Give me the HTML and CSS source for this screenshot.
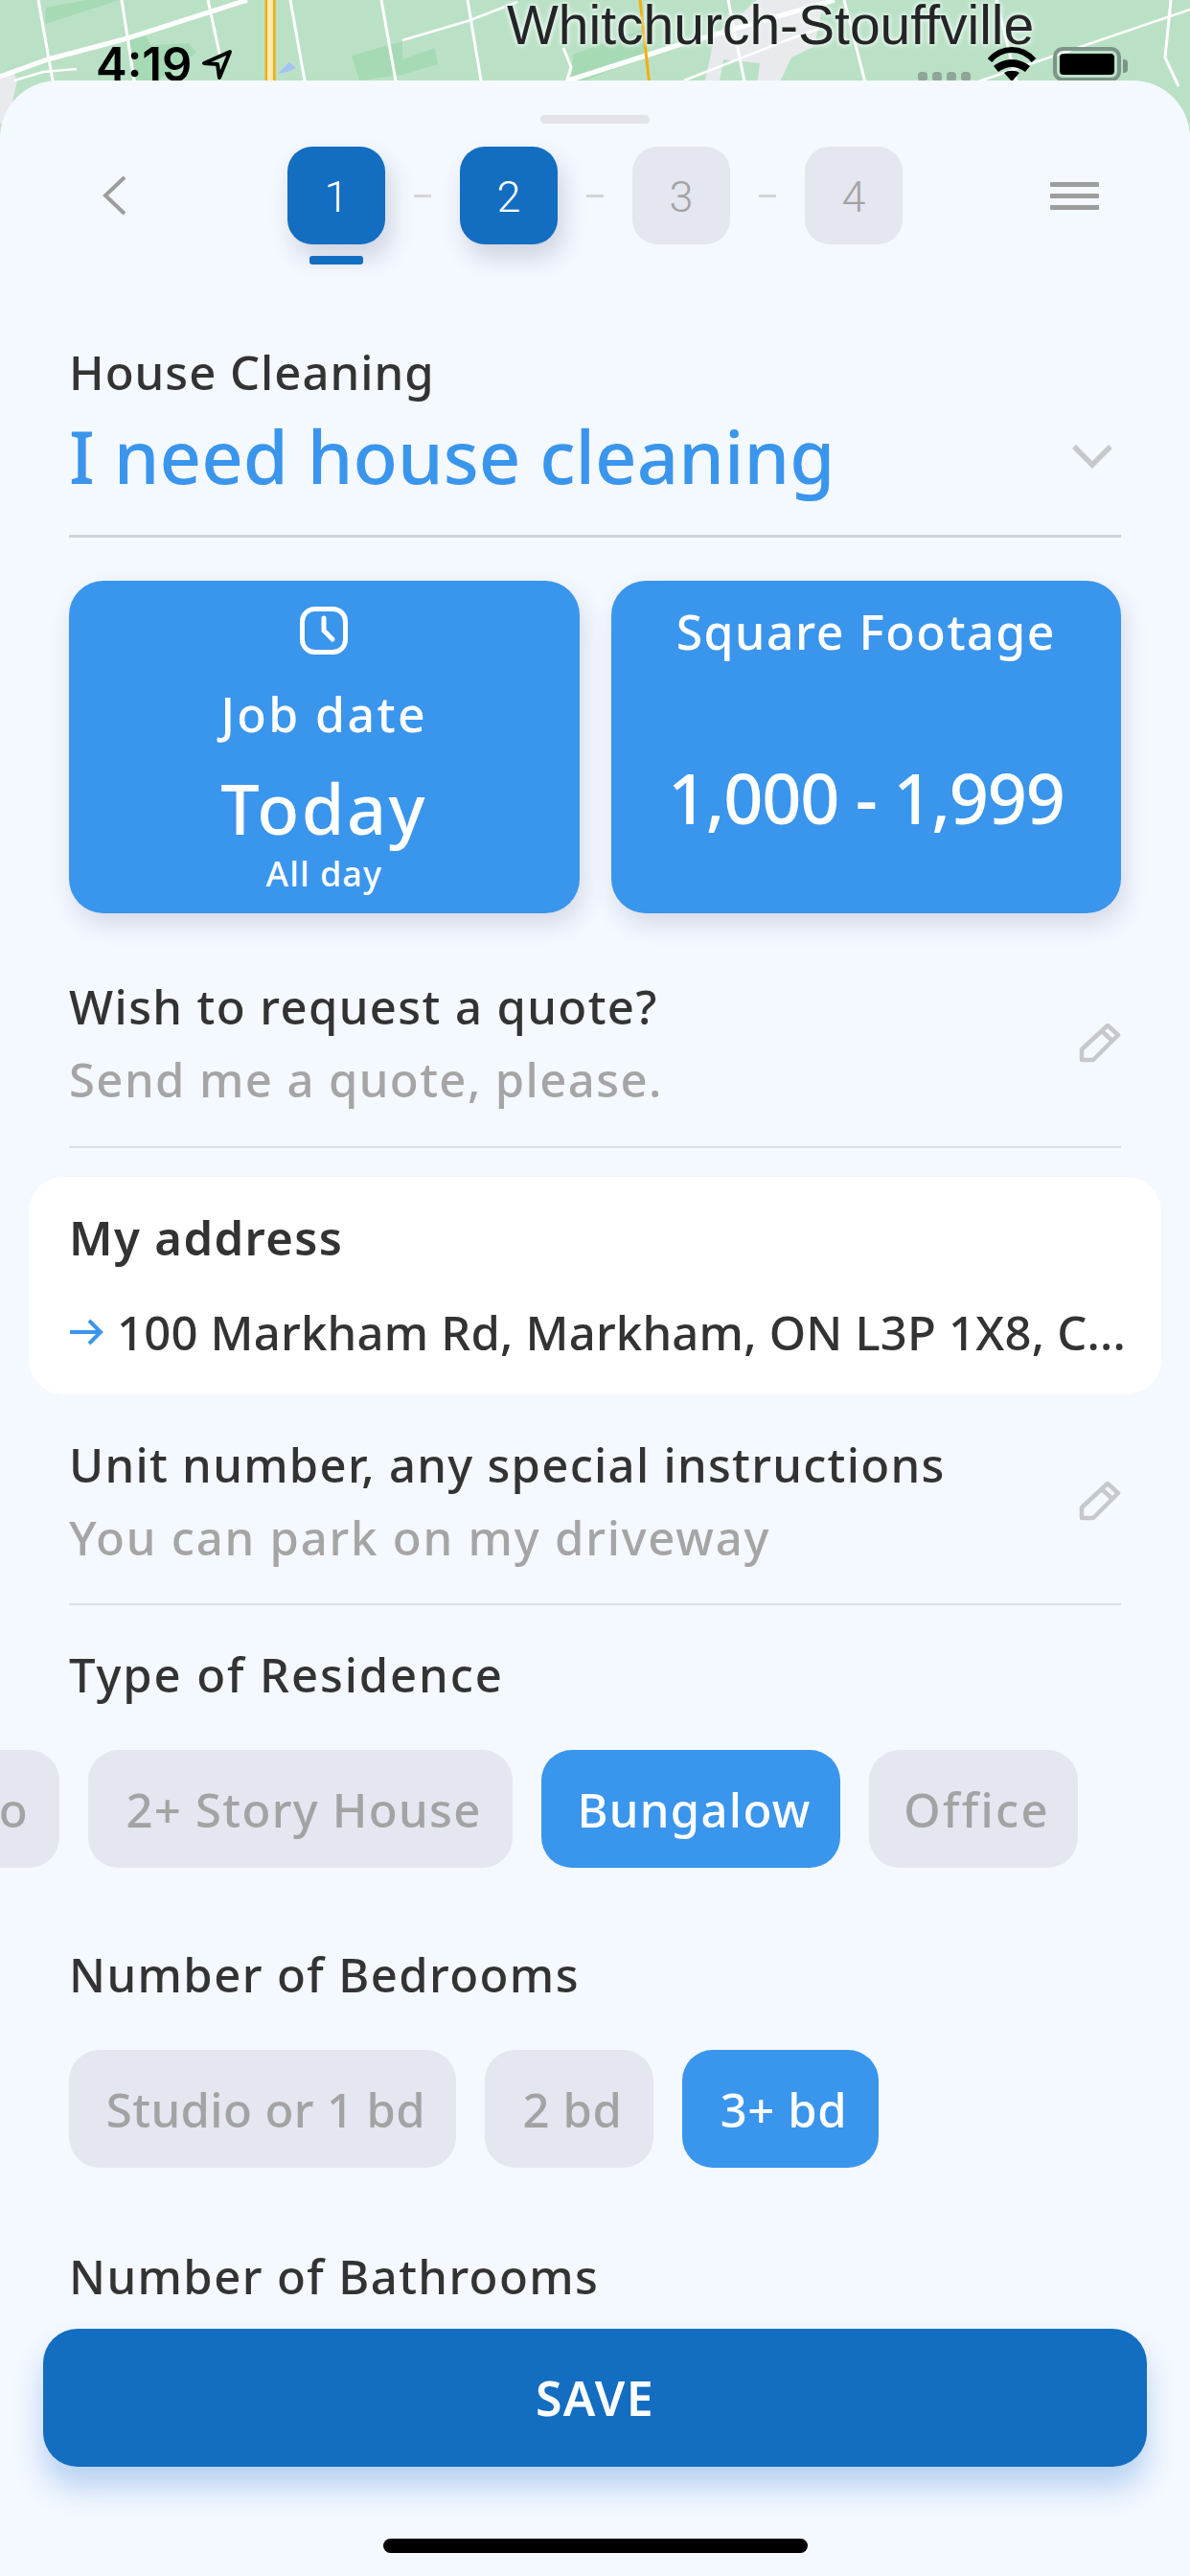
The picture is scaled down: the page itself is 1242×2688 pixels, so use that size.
FILE: index.html
```html
<!DOCTYPE html>
<html lang="en">
<head>
<meta charset="utf-8">
<title>House Cleaning</title>
<link rel="stylesheet" href="styles.css">
</head>
<body>
<div class="phone">
  <svg class="map" width="1242" height="170" viewBox="0 0 1242 170">
    <rect class="m-bg" width="1242" height="170"/>
    <polygon class="m-dark" points="48,8 90,0 125,0 47,25"/>
    <polygon class="m-dark" points="135,40 152,37 157,47 197,45 205,55 165,84 140,84"/>
    <polygon class="m-dark" points="367,58 420,43 420,62 454,50 457,67 420,78 375,84"/>
    <polygon class="m-dark" points="598,57 672,30 672,60 610,84 596,84"/>
    <polygon class="m-gray" points="790,0 860,0 850,48 826,60 812,90 790,90 793,66 755,62 750,90 735,90 745,40"/>
    <polygon class="m-gray" points="0,80 15,77 18,84 10,120 0,130"/>
    <polygon class="m-blue" points="290,77 302,65 309,71 300,75"/>
    <g class="m-road">
      <path d="M40 0L56 90M127 0L141 90M217 0L230 60M303 0L319 90M398 0L414 90M488 0L503 90M881 0L904 90"/>
      <path d="M760 0L778 90M1222 0L1216 60L1230 90M588 50L596 70L590 90M1040 0L1062 90"/>
    </g>
    <path class="m-road-thick" d="M258 0L133 40L50 62L0 80"/>
    <path class="m-road-thick" d="M593 84L708 47L871 0"/>
    <g class="m-road-thin">
      <path d="M420 42L488 22L540 2M714 84L818 43L860 28M1242 10L1007 90M15 84L45 75L80 72"/>
    </g>
    <path class="m-yellow" d="M282 0V90"/>
    <path class="m-yellow-in" d="M282 0V90"/>
    <path class="m-yellow-thin" d="M668 0L678 90"/>
  </svg>
  <div class="place">Whitchurch-Stouffville</div>
  <div class="status">
    <span class="clock">4:19</span>
    <svg class="loc" width="34" height="34" viewBox="0 0 34 34"><path d="M31 3L4 15L18 16L20 30Z" fill="none" stroke="#000" stroke-width="4" stroke-linejoin="round"/></svg>
    <span class="signal"><i></i><i></i><i></i><i></i></span>
    <svg class="wifi" width="50" height="36" viewBox="0 0 50 36"><path d="M25 36L17 27C21 24 29 24 33 27ZM25 21C20 21 15 23 11 26L6 20C11 16 18 13 25 13C32 13 39 16 44 20L39 26C35 23 30 21 25 21Z" fill="#000"/><path d="M2 14C8 7 16 3 25 3C34 3 42 7 48 14" fill="none" stroke="#000" stroke-width="6"/></svg>
    <span class="battery"><b></b></span>
    <span class="nub"></span>
  </div>

  <main class="sheet">
    <div class="grabber"></div>
    <nav class="stepper">
      <svg class="back" width="25" height="42" viewBox="0 0 25 42"><path d="M23 2L3 21L23 40" fill="none" stroke="#9d9d9d" stroke-width="4"/></svg>
      <div class="steps">
        <div class="step on current">1</div><span class="dash"></span>
        <div class="step on">2</div><span class="dash"></span>
        <div class="step">3</div><span class="dash"></span>
        <div class="step">4</div>
      </div>
      <div class="menu"><i></i><i></i><i></i></div>
    </nav>

    <div class="form">
      <div class="label service-label">House Cleaning</div>
      <div class="service">
        <span class="service-name">I need house cleaning</span>
        <svg class="chev" width="44" height="26" viewBox="0 0 44 26"><path d="M3 3L22 22L41 3" fill="none" stroke="#c6c9cc" stroke-width="5.5"/></svg>
      </div>

      <div class="cards">
        <div class="card">
          <svg class="clock-ic" width="50" height="50" viewBox="0 0 50 50"><rect x="2.5" y="2.5" width="45" height="45" rx="13" fill="none" stroke="#fff" stroke-width="5"/><path d="M25 12V25L34 34" fill="none" stroke="#fff" stroke-width="5" stroke-linecap="round" stroke-linejoin="round"/></svg>
          <div class="card-title job">Job date</div>
          <div class="today">Today</div>
          <div class="allday">All day</div>
        </div>
        <div class="card">
          <div class="card-title sq">Square Footage</div>
          <div class="range">1,000 - 1,999</div>
        </div>
      </div>

      <div class="row first">
        <div class="row-text">
          <div class="label quote">Wish to request a quote?</div>
          <div class="sub send">Send me a quote, please.</div>
        </div>
        <svg class="pen" width="44" height="42" viewBox="0 0 44 42"><path d="M30 3L41 13L15 39H3V28ZM24 9L35 19" fill="none" stroke="#c6c8cb" stroke-width="4.5" stroke-linejoin="round"/></svg>
      </div>

      <div class="address">
        <div class="addr-title">My address</div>
        <div class="addr-line">
          <svg class="arrow" width="36" height="28" viewBox="0 0 36 28"><path d="M1 14H33M21 2L33 14L21 26" fill="none" stroke="#3a95ec" stroke-width="4"/></svg>
          <span class="addr-text">100 Markham Rd, Markham, ON L3P 1X8, C...</span>
        </div>
      </div>

      <div class="row second">
        <div class="row-text">
          <div class="label unit">Unit number, any special instructions</div>
          <div class="sub park">You can park on my driveway</div>
        </div>
        <svg class="pen" width="44" height="42" viewBox="0 0 44 42"><path d="M30 3L41 13L15 39H3V28ZM24 9L35 19" fill="none" stroke="#c6c8cb" stroke-width="4.5" stroke-linejoin="round"/></svg>
      </div>

      <div class="label group type">Type of Residence</div>
      <div class="chips scrolled">
        <span class="chip condo">Condo</span>
        <span class="chip story">2+ Story House</span>
        <span class="chip sel bung">Bungalow</span>
        <span class="chip office">Office</span>
      </div>

      <div class="label group beds">Number of Bedrooms</div>
      <div class="chips">
        <span class="chip studio">Studio or 1 bd</span>
        <span class="chip two">2 bd</span>
        <span class="chip sel three">3+ bd</span>
      </div>

      <div class="label group baths">Number of Bathrooms</div>
    </div>
  </main>

  <button class="save">SAVE</button>
  <div class="home"></div>
</div>
</body>
</html>
```
FILE: styles.css
```css
* { box-sizing: border-box; }
html, body { margin: 0; padding: 0; }
body { font-family: "Noto Sans", "Lato", sans-serif; font-weight: 500; background: #f4f8ff; }
.phone { position: relative; width: 1242px; height: 2688px; overflow: hidden; background: #f4f8ff; }

/* map behind the sheet */
.map { position: absolute; top: 0; left: 0; }
.m-bg { fill: #bae1c6; }
.m-dark { fill: #a6dab5; }
.m-gray { fill: #e9eaee; }
.m-blue { fill: #a2c4f5; }
.m-road { fill: none; stroke: #fff; stroke-width: 3; }
.m-road-thick { fill: none; stroke: #fff; stroke-width: 5; }
.m-road-thin { fill: none; stroke: #fff; stroke-width: 2.5; }
.m-yellow { fill: none; stroke: #f5ae0e; stroke-width: 11; }
.m-yellow-in { fill: none; stroke: #fde9b2; stroke-width: 6; }
.m-yellow-thin { fill: none; stroke: #f5ae0e; stroke-width: 3; }
.place { position: absolute; left: 529px; top: -7px; font-family: "Liberation Sans", sans-serif; font-weight: 400; font-size: 57px; line-height: 66px; color: #232527; white-space: nowrap; text-shadow: 0 0 4px #eaf6ee, 0 0 4px #eaf6ee, 0 0 6px #eaf6ee; }

/* status bar */
.status { position: absolute; top: 0; left: 0; width: 1242px; height: 84px; overflow: hidden; }
.clock { position: absolute; left: 100px; top: 40px; font-family: "Inter", sans-serif; font-weight: 600; font-size: 49px; line-height: 56px; color: #000; }
.loc { position: absolute; left: 209px; top: 51px; }
.signal { position: absolute; left: 958px; top: 75px; display: flex; gap: 5px; }
.signal i { display: block; width: 10px; height: 10px; border-radius: 4px; background: #8fa598; }
.wifi { position: absolute; left: 1031px; top: 49px; }
.battery { position: absolute; left: 1099px; top: 49px; width: 71px; height: 36px; border: 4px solid #7d9488; border-radius: 10px; padding: 3px; }
.battery b { display: block; width: 100%; height: 100%; background: #000; border-radius: 4px; }
.nub { position: absolute; left: 1172px; top: 62px; width: 5px; height: 14px; background: #7d9488; border-radius: 0 4px 4px 0; }

/* sheet */
.sheet { position: relative; margin-top: 84px; height: 2604px; padding-top: 36px; background: #f4f8ff; border-radius: 60px 60px 0 0; }
.grabber { width: 114px; height: 9px; margin: 0 auto; background: #e2e4e8; border-radius: 5px; }

.stepper { display: flex; align-items: center; margin-top: 24px; padding-left: 107px; }
.back { margin-right: 168px; }
.steps { display: flex; align-items: center; }
.step { position: relative; width: 102px; height: 102px; padding-top: 2px; border-radius: 26px; background: #e4e6f0; color: #a3a3a3; font-family: "Roboto", sans-serif; font-weight: 300; font-size: 45px; display: flex; align-items: center; justify-content: center; }
.step.on { background: #136dc0; color: #fff; box-shadow: 6px 14px 24px rgba(60, 70, 100, 0.2); }
.step.current::after { content: ""; position: absolute; left: 23px; top: 114px; width: 56px; height: 9px; border-radius: 3px; background: #136dc0; }
.dash { display: block; width: 18px; height: 3px; margin: 0 30px; background: #d3d5d6; }
.menu { margin-left: 154px; display: flex; flex-direction: column; gap: 7px; }
.menu i { display: block; width: 51px; height: 5px; border-radius: 1px; background: #9d9d9d; }

.form { padding: 0 72px; }
.label { font-size: 49px; line-height: 60px; color: #333; white-space: nowrap; }
.service-label { margin-top: 103px; letter-spacing: 1px; }
.service { display: flex; align-items: center; justify-content: space-between; height: 143px; padding: 14px 8px 39px 0; border-bottom: 3px solid #d0d3d8; }
.service-name { font-size: 76px; line-height: 90px; color: #3a95ec; letter-spacing: 0.05px; white-space: nowrap; }

.cards { display: flex; gap: 33px; margin-top: 45px; height: 347px; }
.card { flex: 1; display: flex; flex-direction: column; align-items: center; background: #3a95ec; color: #fff; border-radius: 36px; box-shadow: 4px 12px 24px rgba(60, 70, 110, 0.16); white-space: nowrap; }
.clock-ic { margin-top: 27px; flex: none; }
.card-title { font-size: 50px; line-height: 60px; }
.job { margin-top: 32px; letter-spacing: 2.4px; }
.sq { margin-top: 23px; letter-spacing: 1.5px; }
.today { margin-top: 23px; font-size: 72px; line-height: 90px; letter-spacing: 2.5px; }
.allday { margin-top: 2px; font-size: 36px; line-height: 44px; letter-spacing: 1px; }
.range { margin-top: 103px; font-size: 72px; line-height: 80px; letter-spacing: -1.2px; }

.row { display: flex; align-items: center; justify-content: space-between; border-bottom: 2px solid #dcdfe6; }
.row.first { padding: 67px 0 40px; }
.row.second { padding: 43px 0 39px; }
.sub { margin-top: 16px; font-size: 49px; line-height: 60px; color: #a5a5a5; white-space: nowrap; }
.quote { letter-spacing: 1.4px; }
.send { letter-spacing: 1.4px; }
.unit { letter-spacing: 1.3px; }
.park { letter-spacing: 1.8px; }

.address { margin: 30px -42px 0; padding: 33px 42px 35px; background: #fff; border-radius: 36px; }
.addr-title { font-size: 49px; line-height: 60px; font-weight: 600; color: #333; letter-spacing: 1.4px; }
.addr-line { display: flex; align-items: center; margin-top: 39px; white-space: nowrap; }
.arrow { flex: none; }
.addr-text { margin-left: 14px; font-size: 49px; line-height: 60px; color: #333; letter-spacing: 0.2px; }

.group.type { margin-top: 42px; letter-spacing: 1.9px; }
.group.beds { margin-top: 81px; letter-spacing: 1.4px; }
.group.baths { margin-top: 83px; letter-spacing: 1.4px; }

.chips { display: flex; gap: 30px; margin-top: 49px; white-space: nowrap; }
.chips.scrolled { margin-left: -272px; }
.chip { display: flex; align-items: center; justify-content: center; height: 123px; padding-left: 7px; border-radius: 32px; background: #e4e6f0; color: #a3a3a3; font-size: 49px; letter-spacing: 1.3px; }
.chip.sel { background: #3a95ec; color: #fff; }
.condo { width: 262px; justify-content: flex-end; padding-right: 32px; }
.story { width: 443px; }
.bung { width: 312px; }
.office { width: 218px; letter-spacing: 2.3px; }
.studio { width: 404px; letter-spacing: 0.4px; }
.two { width: 176px; letter-spacing: 0.6px; }
.three { width: 205px; letter-spacing: 0.6px; }

.save { position: absolute; left: 45px; top: 2430px; width: 1152px; height: 144px; border: 0; border-radius: 36px; background: #136dc0; color: #fff; font-family: "Noto Sans", sans-serif; font-weight: 600; font-size: 50px; letter-spacing: 1.4px; box-shadow: 0 22px 30px rgba(60, 130, 215, 0.32); }
.home { position: absolute; left: 400px; top: 2649px; width: 443px; height: 15px; border-radius: 8px; background: #000; }
```
